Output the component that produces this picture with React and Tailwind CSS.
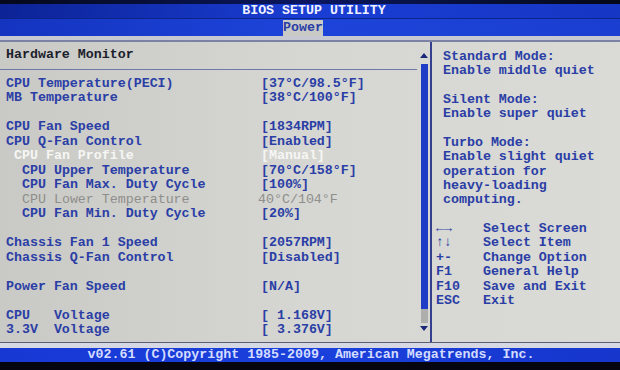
import React from 'react';

const rows = [
  { label: 'CPU Temperature(PECI)', value: '[37°C/98.5°F]' },
  { label: 'MB Temperature', value: '[38°C/100°F]' },
  null,
  { label: 'CPU Fan Speed', value: '[1834RPM]' },
  { label: 'CPU Q-Fan Control', value: '[Enabled]' },
  { label: 'CPU Fan Profile', value: '[Manual]', indent: 1, tone: 'white' },
  { label: 'CPU Upper Temperature', value: '[70°C/158°F]', indent: 2 },
  { label: 'CPU Fan Max. Duty Cycle', value: '[100%]', indent: 2 },
  { label: 'CPU Lower Temperature', value: '40°C/104°F', indent: 2, tone: 'gray' },
  { label: 'CPU Fan Min. Duty Cycle', value: '[20%]', indent: 2 },
  null,
  { label: 'Chassis Fan 1 Speed', value: '[2057RPM]' },
  { label: 'Chassis Q-Fan Control', value: '[Disabled]' },
  null,
  { label: 'Power Fan Speed', value: '[N/A]' },
  null,
  { label: 'CPU   Voltage', value: '[ 1.168V]' },
  { label: '3.3V  Voltage', value: '[ 3.376V]' },
];

const help = [
  'Standard Mode:',
  'Enable middle quiet',
  '',
  'Silent Mode:',
  'Enable super quiet',
  '',
  'Turbo Mode:',
  'Enable slight quiet',
  'operation for',
  'heavy-loading',
  'computing.',
  '',
];

const keys = [
  ['←→', 'Select Screen'],
  ['↑↓', 'Select Item'],
  ['+-', 'Change Option'],
  ['F1', 'General Help'],
  ['F10', 'Save and Exit'],
  ['ESC', 'Exit'],
];

const toneClass = {
  white: 'text-[#f6f6f4]',
  gray: 'text-[#8e8e8c] font-normal',
};

const Row = ({ row }) => {
  if (!row) return <div className="h-[14.5px]" />;
  const tone = toneClass[row.tone] || 'text-[#2a3ea6]';
  const pad = row.indent === 2 ? 'pl-[16px]' : row.indent === 1 ? 'pl-[8px]' : '';
  return (
    <div className={`grid grid-cols-[255px_1fr] h-[14.5px] ${tone}`}>
      <span className={pad}>{row.label}</span>
      <span className={row.tone === 'gray' ? '-ml-[3px]' : ''}>{row.value}</span>
    </div>
  );
};

export default function App() {
  return (
    <div
      className="w-[620px] h-[370px] overflow-hidden bg-black flex flex-col font-bold text-[13.3px] leading-[14.5px] whitespace-pre"
      style={{ fontFamily: '"Liberation Mono", "DejaVu Sans Mono", monospace' }}
    >
      <div className="h-[4px] bg-gradient-to-r from-[#05081a] via-[#0a1660] to-[#050818]" />
      <div className="h-[14px] bg-gradient-to-r from-[#0c2396] via-[#1a3ed4] to-[#1636c4] flex items-center justify-center pl-[8px] text-[#eef0ff]">
        BIOS SETUP UTILITY
      </div>
      <div className="h-px bg-[#0d2488]" />
      <div className="h-[17px] bg-gradient-to-r from-[#1434c0] via-[#1d44da] to-[#1a3ed0] flex pl-[283px] pt-px">
        <div className="w-[40px] h-[16px] bg-[#c9c9c6] text-[#2a3ea6] flex items-center">Power</div>
      </div>

      <div className="h-[4px] bg-[#c6c8d2]" />
      <div className="h-[2px] bg-[#7c82a6]" />
      <div className="h-[300px] flex bg-gradient-to-r from-[#c9c9c5] via-[#d6d6d2] to-[#dadad6]">
        <div className="w-[418px] pt-[6px]">
          <div className="pl-[6px] h-[14.5px] text-[#1c1e2c]">Hardware Monitor</div>
          <div className="mt-[6.5px] mr-[1px] h-px bg-[#6f78a8]" />
          <div className="mt-[6.5px] pl-[6px]">
            {rows.map((row, i) => (
              <Row key={i} row={row} />
            ))}
          </div>
        </div>

        <div className="w-[12px] flex flex-col items-center pt-[11px]">
          <div className="w-0 h-0 border-l-[4px] border-r-[4px] border-b-[5px] border-l-transparent border-r-transparent border-b-[#1a2a78]" />
          <div className="mt-[6px] w-[7px] h-[245px] bg-[#1e3cc6]" />
          <div className="w-[7px] h-[14px] bg-[#aeaeac]" />
          <div className="mt-[3px] w-0 h-0 border-l-[4px] border-r-[4px] border-t-[5px] border-l-transparent border-r-transparent border-t-[#1a2a78]" />
        </div>

        <div className="w-[2px] bg-[#34408e]" />

        <div className="flex-1 pl-[4px] pt-[8px] leading-[14.35px] text-[#2a3ea6]">
          {help.map((line, i) => (
            <div key={i} className="h-[14.35px] pl-[7px]">
              {line}
            </div>
          ))}
          {keys.map(([k, d]) => (
            <div key={k} className="h-[14.35px] flex">
              <span className="w-[47px]">{k}</span>
              <span>{d}</span>
            </div>
          ))}
        </div>
      </div>
      <div className="h-px bg-[#5a5e78]" />
      <div className="h-[5px] bg-[#d6d8e4]" />
      <div className="h-[14px] bg-gradient-to-r from-[#1838d4] via-[#1a40dc] to-[#1636cc] flex items-center justify-center pl-[2px] text-[#d4dcff]">
        v02.61 (C)Copyright 1985-2009, American Megatrends, Inc.
      </div>
      <div className="flex-1 bg-[#050510]" />
    </div>
  );
}
